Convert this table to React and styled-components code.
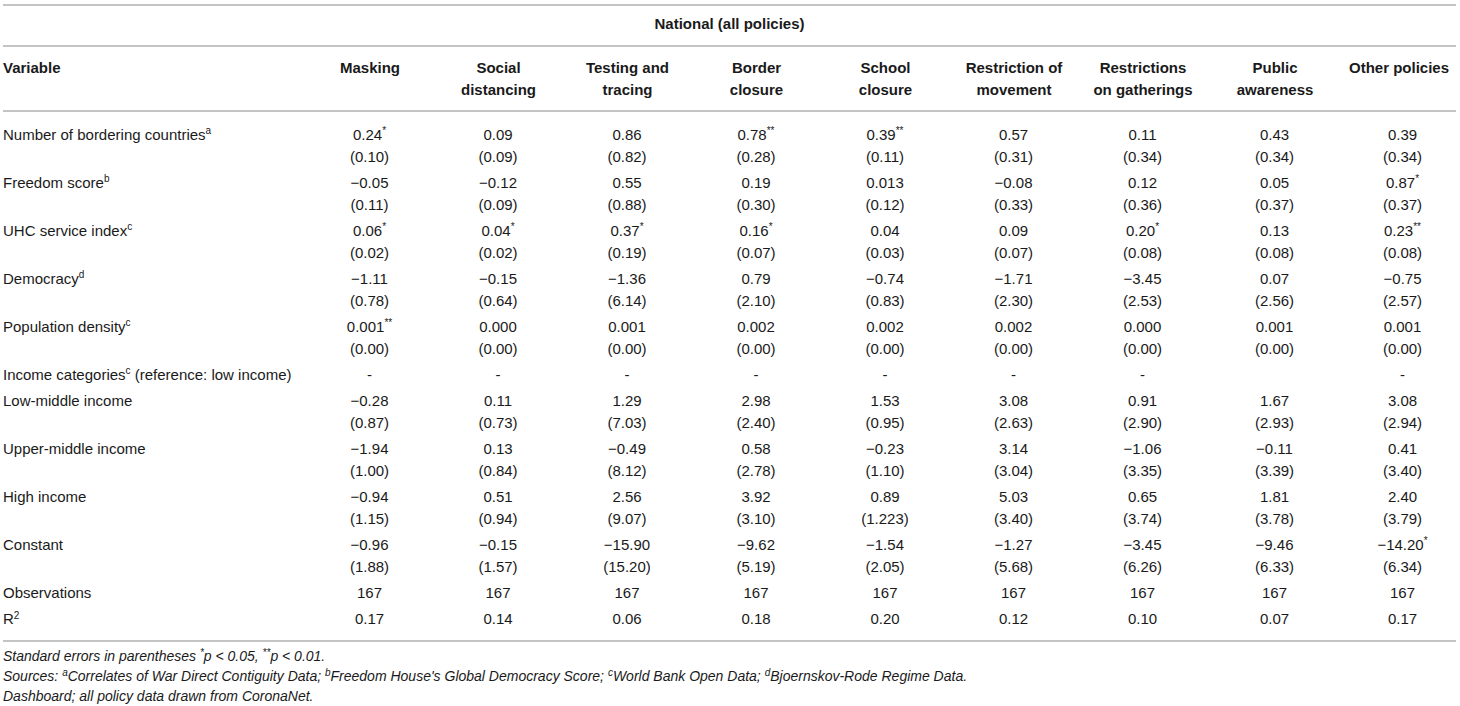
import React from 'react';
import styled, { createGlobalStyle } from 'styled-components';

const Global = createGlobalStyle`
  html, body {
    margin: 0;
    padding: 0;
    background: #ffffff;
  }
  body {
    font-family: "Liberation Sans", Arial, sans-serif;
    color: #1a1a1a;
  }
`;

const Page = styled.div`
  padding: 4px 4px 0 3px;
  width: 1453px;
`;

const Table = styled.table`
  width: 1453px;
  table-layout: fixed;
  border-collapse: collapse;
  font-size: 15px;
  line-height: 22px;
`;

const TitleCell = styled.th`
  border-top: 2px solid #c4c4c4;
  border-bottom: 2px solid #c4c4c4;
  padding: 7px 0 10px;
  text-align: center;
  font-weight: bold;
`;

const HeadCell = styled.th`
  border-bottom: 2px solid #c4c4c4;
  padding: 10px 3px 9px;
  vertical-align: top;
  font-weight: bold;
  text-align: ${({ left }) => (left ? 'left' : 'center')};
  padding-left: ${({ left }) => (left ? '0' : '3px')};
`;

const Row = styled.tr`
  td {
    padding-top: ${({ first }) => (first ? '12px' : '2px')};
    padding-bottom: ${({ last }) => (last ? '10px' : '2px')};
    border-bottom: ${({ last }) => (last ? '2px solid #c4c4c4' : 'none')};
  }
`;

const Label = styled.td`
  padding-left: 0;
  vertical-align: top;
  text-align: left;
  white-space: nowrap;
`;

const Value = styled.td`
  vertical-align: top;
  text-align: center;
  padding-left: ${({ shift }) => (shift ? '8px' : '0')};
`;

const Line = styled.div`
  white-space: nowrap;
`;

const Sup = styled.sup`
  font-size: 10px;
  line-height: 0;
  vertical-align: ${({ low }) => (low ? '5px' : '6px')};
`;

const Notes = styled.div`
  padding-top: 4px;
  font-size: 14px;
  line-height: 20px;
  font-style: italic;
  color: #1a1a1a;
`;

const NoteSup = styled.sup`
  font-size: 10px;
  line-height: 0;
  vertical-align: 5px;
  font-style: italic;
`;

const columns = [
  ['Masking'],
  ['Social', 'distancing'],
  ['Testing and', 'tracing'],
  ['Border', 'closure'],
  ['School', 'closure'],
  ['Restriction of', 'movement'],
  ['Restrictions', 'on gatherings'],
  ['Public', 'awareness'],
  ['Other policies'],
];

const widths = [303, 128, 129, 129, 129, 129, 128, 130, 134, 114];

const M = '\u2212';

const rows = [
  {
    label: 'Number of bordering countries', note: 'a',
    est: ['0.24*', '0.09', '0.86', '0.78**', '0.39**', '0.57', '0.11', '0.43', '0.39'],
    se: ['0.10', '0.09', '0.82', '0.28', '0.11', '0.31', '0.34', '0.34', '0.34'],
  },
  {
    label: 'Freedom score', note: 'b',
    est: [M + '0.05', M + '0.12', '0.55', '0.19', '0.013', M + '0.08', '0.12', '0.05', '0.87*'],
    se: ['0.11', '0.09', '0.88', '0.30', '0.12', '0.33', '0.36', '0.37', '0.37'],
  },
  {
    label: 'UHC service index', note: 'c',
    est: ['0.06*', '0.04*', '0.37*', '0.16*', '0.04', '0.09', '0.20*', '0.13', '0.23**'],
    se: ['0.02', '0.02', '0.19', '0.07', '0.03', '0.07', '0.08', '0.08', '0.08'],
  },
  {
    label: 'Democracy', note: 'd',
    est: [M + '1.11', M + '0.15', M + '1.36', '0.79', M + '0.74', M + '1.71', M + '3.45', '0.07', M + '0.75'],
    se: ['0.78', '0.64', '6.14', '2.10', '0.83', '2.30', '2.53', '2.56', '2.57'],
  },
  {
    label: 'Population density', note: 'c',
    est: ['0.001**', '0.000', '0.001', '0.002', '0.002', '0.002', '0.000', '0.001', '0.001'],
    se: ['0.00', '0.00', '0.00', '0.00', '0.00', '0.00', '0.00', '0.00', '0.00'],
  },
  {
    label: 'Income categories', note: 'c', rest: ' (reference: low income)',
    est: ['-', '-', '-', '-', '-', '-', '-', '', '-'],
  },
  {
    label: 'Low-middle income',
    est: [M + '0.28', '0.11', '1.29', '2.98', '1.53', '3.08', '0.91', '1.67', '3.08'],
    se: ['0.87', '0.73', '7.03', '2.40', '0.95', '2.63', '2.90', '2.93', '2.94'],
  },
  {
    label: 'Upper-middle income',
    est: [M + '1.94', '0.13', M + '0.49', '0.58', M + '0.23', '3.14', M + '1.06', M + '0.11', '0.41'],
    se: ['1.00', '0.84', '8.12', '2.78', '1.10', '3.04', '3.35', '3.39', '3.40'],
  },
  {
    label: 'High income',
    est: [M + '0.94', '0.51', '2.56', '3.92', '0.89', '5.03', '0.65', '1.81', '2.40'],
    se: ['1.15', '0.94', '9.07', '3.10', '1.223', '3.40', '3.74', '3.78', '3.79'],
  },
  {
    label: 'Constant',
    est: [M + '0.96', M + '0.15', M + '15.90', M + '9.62', M + '1.54', M + '1.27', M + '3.45', M + '9.46', M + '14.20*'],
    se: ['1.88', '1.57', '15.20', '5.19', '2.05', '5.68', '6.26', '6.33', '6.34'],
  },
  {
    label: 'Observations',
    est: ['167', '167', '167', '167', '167', '167', '167', '167', '167'],
  },
  {
    label: 'R', note: '2', big: true,
    est: ['0.17', '0.14', '0.06', '0.18', '0.20', '0.12', '0.10', '0.07', '0.17'],
  },
];

const Estimate = ({ text }) => {
  const m = text.match(/^(.*?)(\*+)$/);
  if (!m) return <Line>{text || '\u00a0'}</Line>;
  return (
    <Line>
      {m[1]}
      <Sup>{m[2]}</Sup>
    </Line>
  );
};

export default function App() {
  return (
    <Page>
      <Global />
      <Table>
        <colgroup>
          {widths.map((w, i) => (
            <col key={i} style={{ width: w }} />
          ))}
        </colgroup>
        <thead>
          <tr>
            <TitleCell colSpan={10}>National (all policies)</TitleCell>
          </tr>
          <tr>
            <HeadCell left>Variable</HeadCell>
            {columns.map((c, i) => (
              <HeadCell key={i}>
                {c.map((l, j) => (
                  <Line key={j}>{l}</Line>
                ))}
              </HeadCell>
            ))}
          </tr>
        </thead>
        <tbody>
          {rows.map((r, i) => (
            <Row key={i} first={i === 0} last={i === rows.length - 1}>
              <Label>
                {r.label}
                {r.note && <Sup low={r.big}>{r.note}</Sup>}
                {r.rest}
              </Label>
              {r.est.map((v, j) => (
                <Value key={j} shift={j === 8}>
                  <Estimate text={v} />
                  {r.se && <Line>({r.se[j]})</Line>}
                </Value>
              ))}
            </Row>
          ))}
        </tbody>
      </Table>
      <Notes>
        <div>
          Standard errors in parentheses <NoteSup>*</NoteSup>p &lt; 0.05, <NoteSup>**</NoteSup>p &lt; 0.01.
        </div>
        <div>
          Sources: <NoteSup>a</NoteSup>Correlates of War Direct Contiguity Data; <NoteSup>b</NoteSup>Freedom House's
          Global Democracy Score; <NoteSup>c</NoteSup>World Bank Open Data; <NoteSup>d</NoteSup>Bjoernskov-Rode Regime
          Data.
        </div>
        <div>Dashboard; all policy data drawn from CoronaNet.</div>
      </Notes>
    </Page>
  );
}
